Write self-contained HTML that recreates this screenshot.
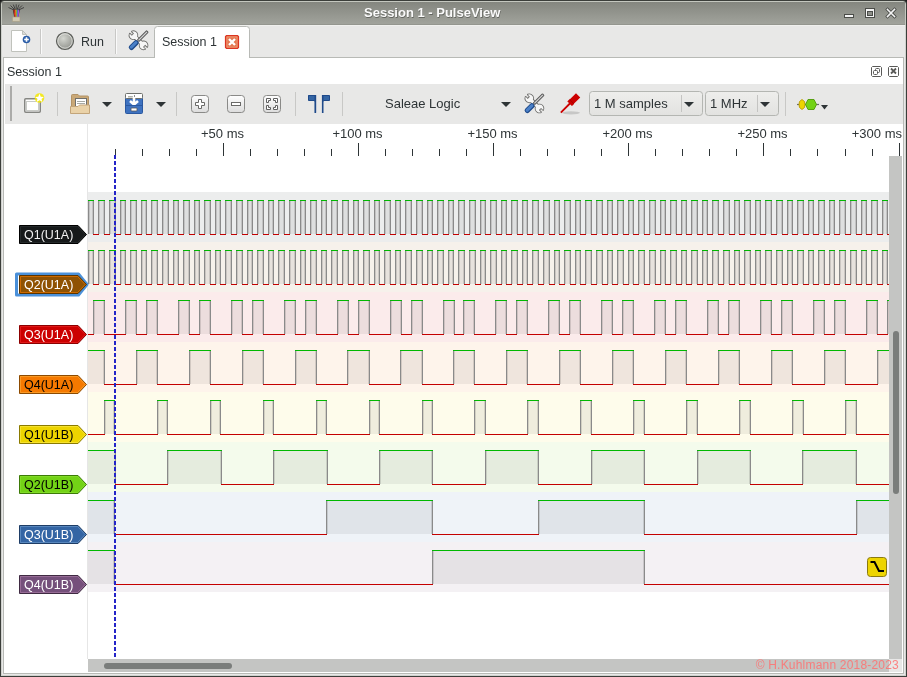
<!DOCTYPE html>
<html><head><meta charset="utf-8">
<style>
html,body{margin:0;padding:0;width:907px;height:677px;overflow:hidden;background:#1a1a1a;}
body{font-family:"Liberation Sans",sans-serif;}
svg{position:absolute;left:0;top:0;will-change:transform;}
svg text{font-family:"Liberation Sans",sans-serif;}
</style></head><body>
<svg width="907" height="677" viewBox="0 0 907 677">

<!-- title bar -->
<defs>
<linearGradient id="tb" x1="0" y1="0" x2="0" y2="1"><stop offset="0" stop-color="#84867f"/><stop offset="1" stop-color="#a1a39c"/></linearGradient>
<radialGradient id="runG" cx="0.4" cy="0.35" r="0.7"><stop offset="0" stop-color="#d4d6d0"/><stop offset="1" stop-color="#8e908a"/></radialGradient>
<linearGradient id="btnG" x1="0" y1="0" x2="0" y2="1"><stop offset="0" stop-color="#ffffff"/><stop offset="1" stop-color="#dcdcdc"/></linearGradient>
<linearGradient id="comboG" x1="0" y1="0" x2="0" y2="1"><stop offset="0" stop-color="#eeeeec"/><stop offset="1" stop-color="#e2e2e0"/></linearGradient>
<path id="wr" d="M-1.8 -12.6L-1.8 -9.2L1.8 -9.2L1.8 -12.6A4.6 4.6 0 1 1 -1.8 -12.6ZM-1.8 -5.5H1.8V5.5H-1.8ZM1.8 12.6L1.8 9.2L-1.8 9.2L-1.8 12.6A4.6 4.6 0 1 1 1.8 12.6Z"/>
</defs>
<path d="M0 4Q0 0 4 0H903Q907 0 907 4V677H0Z" fill="#3b3e3a"/>
<path d="M1 4.5Q1 1 4.5 1H902.5Q906 1 906 4.5V676H1Z" fill="#c4c7bf"/>
<rect x="2" y="2" width="903" height="22" fill="url(#tb)"/>
<rect x="2" y="24" width="903" height="1" fill="#94968f"/>
<rect x="1" y="25" width="905" height="651" fill="#d0d2ce"/>
<rect x="2" y="25" width="903" height="650" fill="#e8e8e7"/>
<rect x="2" y="25" width="903" height="1" fill="#f0f0ee"/>
<!-- app icon -->
<g stroke="#2a2a2a" stroke-width="0.9" stroke-opacity="0.85" fill="none">
<path d="M14 10L8.5 7.5M14.5 9.5L10.5 5.5M15.2 9.3L13.3 4.6M16.2 9.2L16.2 4.3M17.2 9.3L19.1 4.6M18 9.5L22 5.5M18.6 10L24 7.5"/>
</g>
<path d="M12.8 9.5H19.8L18.4 17.2H14.2Z" fill="#2a2a2a"/>
<path d="M13.9 9.8L15 17M15 9.8L15.8 17" stroke="#d83020" stroke-width="1"/>
<path d="M15.6 9.8L16.2 17" stroke="#f08a20" stroke-width="1"/>
<path d="M16.6 9.8L16.8 17" stroke="#8ac040" stroke-width="1"/>
<path d="M17.7 9.8L17.4 17" stroke="#5080e0" stroke-width="0.9"/>
<path d="M18.7 9.8L18 17" stroke="#b050e0" stroke-width="1"/>
<rect x="12.3" y="17" width="7.7" height="4.5" fill="#cfc7b0" stroke="#a39b84" stroke-width="0.6"/>
<text x="364" y="17" font-size="13" font-weight="bold" fill="#3a3c38" opacity="0.55" transform="translate(0.6,0.6)">Session 1 - PulseView</text>
<text x="364" y="17" font-size="13" font-weight="bold" fill="#fafafa">Session 1 - PulseView</text>
<!-- window buttons -->
<rect x="844.5" y="14.5" width="9" height="3" fill="#f4f4f4" stroke="#4a4c48"/>
<rect x="865.5" y="8.5" width="9" height="9" fill="#f4f4f4" stroke="#4a4c48" stroke-width="1"/>
<rect x="867.5" y="11.5" width="5" height="4" fill="#8c8e88" stroke="#4a4c48" stroke-width="1"/>
<path d="M887.5 9.5L894.5 16.5M894.5 9.5L887.5 16.5" stroke="#4a4c48" stroke-width="3.2" stroke-linecap="square"/>
<path d="M887.5 9.5L894.5 16.5M894.5 9.5L887.5 16.5" stroke="#f4f4f4" stroke-width="1.6" stroke-linecap="square"/>
<!-- main toolbar -->
<!-- new doc icon -->
<path d="M11.5 30.5H22.5L26.5 34.5V51.5H11.5Z" fill="#fff" stroke="#c0c2bc"/>
<path d="M22.5 30.5V34.5H26.5Z" fill="#dcdcda" stroke="#c0c2bc" stroke-linejoin="round"/>
<circle cx="26.5" cy="39.5" r="3.8" fill="#2c5ea8"/>
<rect x="24.2" y="38.7" width="4.6" height="1.6" fill="#fff"/>
<rect x="25.7" y="37.2" width="1.6" height="4.6" fill="#fff"/>
<rect x="40" y="29" width="1" height="25" fill="#c8c8c6"/><rect x="41" y="29" width="1" height="25" fill="#fafafa"/>
<!-- run -->
<circle cx="65" cy="41" r="8.5" fill="url(#runG)" stroke="#5e605c" stroke-width="1.2"/>
<circle cx="65" cy="41" r="7.2" fill="none" stroke="#f2f2f0" stroke-width="0.8" stroke-opacity="0.8"/>
<text x="81" y="46" font-size="12.5" fill="#2e3436">Run</text>
<rect x="115" y="29" width="1" height="25" fill="#c8c8c6"/><rect x="116" y="29" width="1" height="25" fill="#fafafa"/>
<!-- tools -->
<g id="tools" transform="translate(138.5,40.3)">
<g transform="rotate(-45) scale(0.86)">
<use href="#wr" fill="#6e6e6c" stroke="#6e6e6c" stroke-width="2" stroke-linejoin="round"/>
<use href="#wr" fill="#f6f6f6" stroke="none"/>
</g>
<g transform="rotate(45)">
<rect x="-1.6" y="-13" width="3.2" height="14" rx="1" fill="#5a5a5a"/>
<rect x="-0.6" y="-12" width="1.2" height="12" fill="#d8d8d8"/>
<rect x="-2.6" y="1" width="5.2" height="11.5" rx="2.2" fill="#1f4a8a"/>
<rect x="-1.7" y="2" width="3" height="9.5" rx="1.4" fill="#4a80c8"/>
</g>
</g>
<!-- tab -->
<path d="M154.5 58V29.5Q154.5 26.5 157.5 26.5H246.5Q249.5 26.5 249.5 29.5V58Z" fill="#fff" stroke="#b8bab6"/>
<text x="162" y="46" font-size="12.5" fill="#2e3436">Session 1</text>
<path d="M226.5 35.5H237.5L238.5 36.5V47.5L237.5 48.5H226.5L225.5 47.5V36.5Z" fill="#e4764e" stroke="#dc3522" stroke-width="1.2"/>
<rect x="227" y="37" width="10" height="10" fill="none" stroke="#f09878" stroke-width="0.8"/>
<path d="M229 39L235 45M235 39L229 45" stroke="#fff" stroke-width="2.4"/>
<!-- dock -->
<rect x="3.5" y="57.5" width="900" height="616" fill="#fff" stroke="#b8bab6"/>
<path d="M155 57.5H249" stroke="#fff"/>
<text x="7" y="76" font-size="12.5" fill="#2e3436">Session 1</text>
<!-- dock buttons -->
<path d="M872.5 66.5H880.5L881.5 67.5V75.5L880.5 76.5H872.5L871.5 75.5V67.5Z" fill="none" stroke="#5a5a58"/>
<rect x="875.5" y="68.5" width="4" height="4" rx="1" fill="none" stroke="#5a5a58"/>
<rect x="873.5" y="70.5" width="4" height="4" rx="1" fill="#fff" stroke="#5a5a58"/>
<path d="M889.5 66.5H897.5L898.5 67.5V75.5L897.5 76.5H889.5L888.5 75.5V67.5Z" fill="none" stroke="#5a5a58"/>
<path d="M891 68.5L896 73.5M896 68.5L891 73.5" stroke="#5a5a58" stroke-width="1.8"/>
<!-- session toolbar -->
<rect x="5" y="84" width="898" height="40" fill="#e8e8e7"/>
<rect x="10" y="86" width="2" height="35" fill="#ababa9"/>
<!-- new session -->
<rect x="24.75" y="98.75" width="15.5" height="13.5" rx="1" fill="#fff" stroke="#858682" stroke-width="1.5"/>
<rect x="26.5" y="101.5" width="12" height="9" fill="#fff" stroke="#c8cac6"/>
<circle cx="39.5" cy="98" r="4.8" fill="#f4e800" fill-opacity="0.85"/>
<path d="M39.5 94.6L40.5 97L43 97.1L41.1 98.7L41.8 101.2L39.5 99.8L37.2 101.2L37.9 98.7L36 97.1L38.5 97Z" fill="#fff" transform="translate(39.5 98) scale(1.25) translate(-39.5 -98)"/>
<rect x="57" y="92" width="1" height="24" fill="#c8c8c6"/>
<!-- folder -->
<path d="M71.5 112.5V95.5Q71.5 94.5 72.5 94.5H78L79.5 96H87.5Q88.5 96 88.5 97V112.5Z" fill="#c9a877" stroke="#b39366"/>
<rect x="75.5" y="98.5" width="11" height="9" fill="#fff" stroke="#6f6f6c"/>
<path d="M77 101.5H85M77 103.5H85" stroke="#a8aaa4"/>
<path d="M70.5 113.5V106.5H78L79.5 105H89.5V113.5Z" fill="#ead2a8" stroke="#c3a57a"/>
<path d="M102 102H112L107 107Z" fill="#2e3436"/>
<!-- save -->
<rect x="125.5" y="97.5" width="17" height="16" rx="1" fill="#3e72c0" stroke="#2a58a0"/>
<rect x="125.5" y="93.5" width="17" height="5" rx="1" fill="#fff" stroke="#6e706c"/>
<rect x="128" y="96" width="5" height="1.5" fill="#b0b2ac"/>
<rect x="134" y="95.5" width="1" height="2.5" fill="#222"/>
<path d="M134 96.5V104M130 101L134 104.5L138 101" stroke="#fff" stroke-width="2.6" fill="none"/>
<path d="M126 105.5H142" stroke="#2a58a0"/>
<rect x="131" y="108" width="6" height="3" rx="0.8" fill="#fff" stroke="#555" stroke-width="0.8"/>
<path d="M156 102H166L161 107Z" fill="#2e3436"/>
<rect x="176" y="92" width="1" height="24" fill="#c8c8c6"/>
<!-- zoom buttons -->
<rect x="191.5" y="95.5" width="17" height="17" rx="3" fill="url(#btnG)" stroke="#8a8a88"/>
<path d="M198.5 99.5H201.5V102.5H204.5V105.5H201.5V108.5H198.5V105.5H195.5V102.5H198.5Z" fill="#fff" stroke="#6a6a68"/>
<rect x="227.5" y="95.5" width="17" height="17" rx="3" fill="url(#btnG)" stroke="#8a8a88"/>
<rect x="231.5" y="102.5" width="9" height="3" fill="#fff" stroke="#6a6a68"/>
<rect x="263.5" y="95.5" width="17" height="17" rx="3" fill="url(#btnG)" stroke="#8a8a88"/>
<g fill="#fff" stroke="#606060" stroke-width="1">
<path d="M266.5 102.5V98.5H270.5V100.5H268.5V102.5Z"/>
<path d="M277.5 102.5V98.5H273.5V100.5H275.5V102.5Z"/>
<path d="M266.5 105.5V109.5H270.5V107.5H268.5V105.5Z"/>
<path d="M277.5 105.5V109.5H273.5V107.5H275.5V105.5Z"/>
</g>
<rect x="295" y="92" width="1" height="24" fill="#c8c8c6"/>
<!-- cursor -->
<path d="M308.5 95.5H315.5V112.5" fill="none" stroke="#1f4a8a" stroke-width="1.2"/>
<path d="M308.5 95.5H315.5V101.5L314 100.5H308.5Z" fill="#3465a4" stroke="#1f4a8a" stroke-width="1"/>
<path d="M315.3 95V113" stroke="#1f4a8a" stroke-width="1.6"/>
<path d="M329.5 95.5H322.5V101.5L324 100.5H329.5Z" fill="#3465a4" stroke="#1f4a8a" stroke-width="1"/>
<path d="M322.7 95V113" stroke="#1f4a8a" stroke-width="1.6"/>
<rect x="342" y="92" width="1" height="24" fill="#c8c8c6"/>
<text x="385" y="107.5" font-size="13" fill="#2e3436">Saleae Logic</text>
<path d="M501 102H511L506 107Z" fill="#2e3436"/>
<!-- tools 2 -->
<use href="#tools" transform="translate(395.9,63.1)"/>
<!-- probe -->
<ellipse cx="571" cy="112.8" rx="9" ry="1.6" fill="#000" fill-opacity="0.14"/>
<g transform="translate(560.8,112.6) rotate(-45)">
<path d="M0 -0.9H12.5V-3.3H15.5V-3H24.5V3H15.5V3.3H12.5V0.9H0Z" fill="#cc0000"/>
<path d="M15.5 -3V3" stroke="#a00000" stroke-width="0.8"/>
</g>
<!-- combos -->
<rect x="589.5" y="91.5" width="113" height="24" rx="3" fill="url(#comboG)" stroke="#b4b6b2"/>
<text x="594" y="107.5" font-size="13" fill="#2e3436">1 M samples</text>
<rect x="681" y="95" width="1" height="17" fill="#c4c4c2"/>
<path d="M684 102H694L689 107Z" fill="#2e3436"/>
<rect x="705.5" y="91.5" width="73" height="24" rx="3" fill="url(#comboG)" stroke="#b4b6b2"/>
<text x="710" y="107.5" font-size="13" fill="#2e3436">1 MHz</text>
<rect x="757" y="95" width="1" height="17" fill="#c4c4c2"/>
<path d="M760 102H770L765 107Z" fill="#2e3436"/>
<rect x="785" y="92" width="1" height="24" fill="#c8c8c6"/>
<!-- decoder -->
<path d="M797 104.5H819" stroke="#6a6a6a" stroke-width="1.2"/>
<path d="M802 99.5L804.5 101.5L805 104.5L804.5 107.5L802 109.5L799.5 107.5L799 104.5L799.5 101.5Z" fill="#edd400" stroke="#b89a00" stroke-width="0.9"/>
<path d="M808 99.5H814L816.5 104.5L814 109.5H808L805.5 104.5Z" fill="#73d216" stroke="#4e9a06" stroke-width="0.9"/>
<path d="M821 105H828L824.5 109.5Z" fill="#2e3436"/>

<rect x="87" y="124" width="1" height="535" fill="#e6e6e6"/>
<path d="M115.5 149V156M142.5 149V156M169.5 149V156M196.5 149V156M223.5 143V156M250.5 149V156M277.5 149V156M304.5 149V156M331.5 149V156M358.5 143V156M385.5 149V156M412.5 149V156M439.5 149V156M466.5 149V156M493.5 143V156M520.5 149V156M547.5 149V156M574.5 149V156M601.5 149V156M628.5 143V156M655.5 149V156M682.5 149V156M709.5 149V156M736.5 149V156M763.5 143V156M790.5 149V156M817.5 149V156M845.5 149V156M872.5 149V156M899.5 143V156" stroke="#2e3436" stroke-width="1"/>
<text x="222.5" y="138" text-anchor="middle" font-size="13" fill="#2e3436">+50 ms</text><text x="357.5" y="138" text-anchor="middle" font-size="13" fill="#2e3436">+100 ms</text><text x="492.5" y="138" text-anchor="middle" font-size="13" fill="#2e3436">+150 ms</text><text x="627.5" y="138" text-anchor="middle" font-size="13" fill="#2e3436">+200 ms</text><text x="762.5" y="138" text-anchor="middle" font-size="13" fill="#2e3436">+250 ms</text><text x="902" y="138" text-anchor="end" font-size="13" fill="#2e3436">+300 ms</text>
<rect x="88" y="192" width="801" height="50" fill="#eceded"/><rect x="88" y="201" width="5" height="33" fill="rgba(0,0,0,0.06)"/>
<rect x="98" y="201" width="6" height="33" fill="rgba(0,0,0,0.06)"/>
<rect x="109" y="201" width="6" height="33" fill="rgba(0,0,0,0.06)"/>
<rect x="120" y="201" width="5" height="33" fill="rgba(0,0,0,0.06)"/>
<rect x="130" y="201" width="6" height="33" fill="rgba(0,0,0,0.06)"/>
<rect x="141" y="201" width="5" height="33" fill="rgba(0,0,0,0.06)"/>
<rect x="151" y="201" width="6" height="33" fill="rgba(0,0,0,0.06)"/>
<rect x="162" y="201" width="6" height="33" fill="rgba(0,0,0,0.06)"/>
<rect x="173" y="201" width="5" height="33" fill="rgba(0,0,0,0.06)"/>
<rect x="183" y="201" width="6" height="33" fill="rgba(0,0,0,0.06)"/>
<rect x="194" y="201" width="5" height="33" fill="rgba(0,0,0,0.06)"/>
<rect x="204" y="201" width="6" height="33" fill="rgba(0,0,0,0.06)"/>
<rect x="215" y="201" width="5" height="33" fill="rgba(0,0,0,0.06)"/>
<rect x="225" y="201" width="6" height="33" fill="rgba(0,0,0,0.06)"/>
<rect x="236" y="201" width="6" height="33" fill="rgba(0,0,0,0.06)"/>
<rect x="247" y="201" width="5" height="33" fill="rgba(0,0,0,0.06)"/>
<rect x="257" y="201" width="6" height="33" fill="rgba(0,0,0,0.06)"/>
<rect x="268" y="201" width="5" height="33" fill="rgba(0,0,0,0.06)"/>
<rect x="278" y="201" width="6" height="33" fill="rgba(0,0,0,0.06)"/>
<rect x="289" y="201" width="6" height="33" fill="rgba(0,0,0,0.06)"/>
<rect x="300" y="201" width="5" height="33" fill="rgba(0,0,0,0.06)"/>
<rect x="310" y="201" width="6" height="33" fill="rgba(0,0,0,0.06)"/>
<rect x="321" y="201" width="5" height="33" fill="rgba(0,0,0,0.06)"/>
<rect x="331" y="201" width="6" height="33" fill="rgba(0,0,0,0.06)"/>
<rect x="342" y="201" width="6" height="33" fill="rgba(0,0,0,0.06)"/>
<rect x="353" y="201" width="5" height="33" fill="rgba(0,0,0,0.06)"/>
<rect x="363" y="201" width="6" height="33" fill="rgba(0,0,0,0.06)"/>
<rect x="374" y="201" width="5" height="33" fill="rgba(0,0,0,0.06)"/>
<rect x="384" y="201" width="6" height="33" fill="rgba(0,0,0,0.06)"/>
<rect x="395" y="201" width="5" height="33" fill="rgba(0,0,0,0.06)"/>
<rect x="405" y="201" width="6" height="33" fill="rgba(0,0,0,0.06)"/>
<rect x="416" y="201" width="6" height="33" fill="rgba(0,0,0,0.06)"/>
<rect x="427" y="201" width="5" height="33" fill="rgba(0,0,0,0.06)"/>
<rect x="437" y="201" width="6" height="33" fill="rgba(0,0,0,0.06)"/>
<rect x="448" y="201" width="5" height="33" fill="rgba(0,0,0,0.06)"/>
<rect x="458" y="201" width="6" height="33" fill="rgba(0,0,0,0.06)"/>
<rect x="469" y="201" width="6" height="33" fill="rgba(0,0,0,0.06)"/>
<rect x="480" y="201" width="5" height="33" fill="rgba(0,0,0,0.06)"/>
<rect x="490" y="201" width="6" height="33" fill="rgba(0,0,0,0.06)"/>
<rect x="501" y="201" width="5" height="33" fill="rgba(0,0,0,0.06)"/>
<rect x="511" y="201" width="6" height="33" fill="rgba(0,0,0,0.06)"/>
<rect x="522" y="201" width="5" height="33" fill="rgba(0,0,0,0.06)"/>
<rect x="532" y="201" width="6" height="33" fill="rgba(0,0,0,0.06)"/>
<rect x="543" y="201" width="6" height="33" fill="rgba(0,0,0,0.06)"/>
<rect x="554" y="201" width="5" height="33" fill="rgba(0,0,0,0.06)"/>
<rect x="564" y="201" width="6" height="33" fill="rgba(0,0,0,0.06)"/>
<rect x="575" y="201" width="5" height="33" fill="rgba(0,0,0,0.06)"/>
<rect x="585" y="201" width="6" height="33" fill="rgba(0,0,0,0.06)"/>
<rect x="596" y="201" width="6" height="33" fill="rgba(0,0,0,0.06)"/>
<rect x="607" y="201" width="5" height="33" fill="rgba(0,0,0,0.06)"/>
<rect x="617" y="201" width="6" height="33" fill="rgba(0,0,0,0.06)"/>
<rect x="628" y="201" width="5" height="33" fill="rgba(0,0,0,0.06)"/>
<rect x="638" y="201" width="6" height="33" fill="rgba(0,0,0,0.06)"/>
<rect x="649" y="201" width="6" height="33" fill="rgba(0,0,0,0.06)"/>
<rect x="660" y="201" width="5" height="33" fill="rgba(0,0,0,0.06)"/>
<rect x="670" y="201" width="6" height="33" fill="rgba(0,0,0,0.06)"/>
<rect x="681" y="201" width="5" height="33" fill="rgba(0,0,0,0.06)"/>
<rect x="691" y="201" width="6" height="33" fill="rgba(0,0,0,0.06)"/>
<rect x="702" y="201" width="5" height="33" fill="rgba(0,0,0,0.06)"/>
<rect x="712" y="201" width="6" height="33" fill="rgba(0,0,0,0.06)"/>
<rect x="723" y="201" width="6" height="33" fill="rgba(0,0,0,0.06)"/>
<rect x="734" y="201" width="5" height="33" fill="rgba(0,0,0,0.06)"/>
<rect x="744" y="201" width="6" height="33" fill="rgba(0,0,0,0.06)"/>
<rect x="755" y="201" width="5" height="33" fill="rgba(0,0,0,0.06)"/>
<rect x="765" y="201" width="6" height="33" fill="rgba(0,0,0,0.06)"/>
<rect x="776" y="201" width="6" height="33" fill="rgba(0,0,0,0.06)"/>
<rect x="787" y="201" width="5" height="33" fill="rgba(0,0,0,0.06)"/>
<rect x="797" y="201" width="6" height="33" fill="rgba(0,0,0,0.06)"/>
<rect x="808" y="201" width="5" height="33" fill="rgba(0,0,0,0.06)"/>
<rect x="818" y="201" width="6" height="33" fill="rgba(0,0,0,0.06)"/>
<rect x="829" y="201" width="5" height="33" fill="rgba(0,0,0,0.06)"/>
<rect x="839" y="201" width="6" height="33" fill="rgba(0,0,0,0.06)"/>
<rect x="850" y="201" width="6" height="33" fill="rgba(0,0,0,0.06)"/>
<rect x="861" y="201" width="5" height="33" fill="rgba(0,0,0,0.06)"/>
<rect x="871" y="201" width="6" height="33" fill="rgba(0,0,0,0.06)"/>
<rect x="882" y="201" width="5" height="33" fill="rgba(0,0,0,0.06)"/>
<path d="M88 200.5H94M98 200.5H105M109 200.5H116M120 200.5H126M130 200.5H137M141 200.5H147M151 200.5H158M162 200.5H169M173 200.5H179M183 200.5H190M194 200.5H200M204 200.5H211M215 200.5H221M225 200.5H232M236 200.5H243M247 200.5H253M257 200.5H264M268 200.5H274M278 200.5H285M289 200.5H296M300 200.5H306M310 200.5H317M321 200.5H327M331 200.5H338M342 200.5H349M353 200.5H359M363 200.5H370M374 200.5H380M384 200.5H391M395 200.5H401M405 200.5H412M416 200.5H423M427 200.5H433M437 200.5H444M448 200.5H454M458 200.5H465M469 200.5H476M480 200.5H486M490 200.5H497M501 200.5H507M511 200.5H518M522 200.5H528M532 200.5H539M543 200.5H550M554 200.5H560M564 200.5H571M575 200.5H581M585 200.5H592M596 200.5H603M607 200.5H613M617 200.5H624M628 200.5H634M638 200.5H645M649 200.5H656M660 200.5H666M670 200.5H677M681 200.5H687M691 200.5H698M702 200.5H708M712 200.5H719M723 200.5H730M734 200.5H740M744 200.5H751M755 200.5H761M765 200.5H772M776 200.5H783M787 200.5H793M797 200.5H804M808 200.5H814M818 200.5H825M829 200.5H835M839 200.5H846M850 200.5H857M861 200.5H867M871 200.5H878M882 200.5H888" stroke="#00b800" fill="none"/>
<path d="M93 234.5H99M104 234.5H110M115 234.5H121M125 234.5H131M136 234.5H142M146 234.5H152M157 234.5H163M168 234.5H174M178 234.5H184M189 234.5H195M199 234.5H205M210 234.5H216M220 234.5H226M231 234.5H237M242 234.5H248M252 234.5H258M263 234.5H269M273 234.5H279M284 234.5H290M295 234.5H301M305 234.5H311M316 234.5H322M326 234.5H332M337 234.5H343M348 234.5H354M358 234.5H364M369 234.5H375M379 234.5H385M390 234.5H396M400 234.5H406M411 234.5H417M422 234.5H428M432 234.5H438M443 234.5H449M453 234.5H459M464 234.5H470M475 234.5H481M485 234.5H491M496 234.5H502M506 234.5H512M517 234.5H523M527 234.5H533M538 234.5H544M549 234.5H555M559 234.5H565M570 234.5H576M580 234.5H586M591 234.5H597M602 234.5H608M612 234.5H618M623 234.5H629M633 234.5H639M644 234.5H650M655 234.5H661M665 234.5H671M676 234.5H682M686 234.5H692M697 234.5H703M707 234.5H713M718 234.5H724M729 234.5H735M739 234.5H745M750 234.5H756M760 234.5H766M771 234.5H777M782 234.5H788M792 234.5H798M803 234.5H809M813 234.5H819M824 234.5H830M834 234.5H840M845 234.5H851M856 234.5H862M866 234.5H872M877 234.5H883M887 234.5H890" stroke="#c40000" fill="none"/>
<path d="M88.5 201V234M93.5 201V234M98.5 201V234M104.5 201V234M109.5 201V234M115.5 201V234M120.5 201V234M125.5 201V234M130.5 201V234M136.5 201V234M141.5 201V234M146.5 201V234M151.5 201V234M157.5 201V234M162.5 201V234M168.5 201V234M173.5 201V234M178.5 201V234M183.5 201V234M189.5 201V234M194.5 201V234M199.5 201V234M204.5 201V234M210.5 201V234M215.5 201V234M220.5 201V234M225.5 201V234M231.5 201V234M236.5 201V234M242.5 201V234M247.5 201V234M252.5 201V234M257.5 201V234M263.5 201V234M268.5 201V234M273.5 201V234M278.5 201V234M284.5 201V234M289.5 201V234M295.5 201V234M300.5 201V234M305.5 201V234M310.5 201V234M316.5 201V234M321.5 201V234M326.5 201V234M331.5 201V234M337.5 201V234M342.5 201V234M348.5 201V234M353.5 201V234M358.5 201V234M363.5 201V234M369.5 201V234M374.5 201V234M379.5 201V234M384.5 201V234M390.5 201V234M395.5 201V234M400.5 201V234M405.5 201V234M411.5 201V234M416.5 201V234M422.5 201V234M427.5 201V234M432.5 201V234M437.5 201V234M443.5 201V234M448.5 201V234M453.5 201V234M458.5 201V234M464.5 201V234M469.5 201V234M475.5 201V234M480.5 201V234M485.5 201V234M490.5 201V234M496.5 201V234M501.5 201V234M506.5 201V234M511.5 201V234M517.5 201V234M522.5 201V234M527.5 201V234M532.5 201V234M538.5 201V234M543.5 201V234M549.5 201V234M554.5 201V234M559.5 201V234M564.5 201V234M570.5 201V234M575.5 201V234M580.5 201V234M585.5 201V234M591.5 201V234M596.5 201V234M602.5 201V234M607.5 201V234M612.5 201V234M617.5 201V234M623.5 201V234M628.5 201V234M633.5 201V234M638.5 201V234M644.5 201V234M649.5 201V234M655.5 201V234M660.5 201V234M665.5 201V234M670.5 201V234M676.5 201V234M681.5 201V234M686.5 201V234M691.5 201V234M697.5 201V234M702.5 201V234M707.5 201V234M712.5 201V234M718.5 201V234M723.5 201V234M729.5 201V234M734.5 201V234M739.5 201V234M744.5 201V234M750.5 201V234M755.5 201V234M760.5 201V234M765.5 201V234M771.5 201V234M776.5 201V234M782.5 201V234M787.5 201V234M792.5 201V234M797.5 201V234M803.5 201V234M808.5 201V234M813.5 201V234M818.5 201V234M824.5 201V234M829.5 201V234M834.5 201V234M839.5 201V234M845.5 201V234M850.5 201V234M856.5 201V234M861.5 201V234M866.5 201V234M871.5 201V234M877.5 201V234M882.5 201V234M887.5 201V234" stroke="#8a8a8a" fill="none"/>
<path d="M89.5 201V234M92.5 201V234M99.5 201V234M103.5 201V234M110.5 201V234M114.5 201V234M121.5 201V234M124.5 201V234M131.5 201V234M135.5 201V234M142.5 201V234M145.5 201V234M152.5 201V234M156.5 201V234M163.5 201V234M167.5 201V234M174.5 201V234M177.5 201V234M184.5 201V234M188.5 201V234M195.5 201V234M198.5 201V234M205.5 201V234M209.5 201V234M216.5 201V234M219.5 201V234M226.5 201V234M230.5 201V234M237.5 201V234M241.5 201V234M248.5 201V234M251.5 201V234M258.5 201V234M262.5 201V234M269.5 201V234M272.5 201V234M279.5 201V234M283.5 201V234M290.5 201V234M294.5 201V234M301.5 201V234M304.5 201V234M311.5 201V234M315.5 201V234M322.5 201V234M325.5 201V234M332.5 201V234M336.5 201V234M343.5 201V234M347.5 201V234M354.5 201V234M357.5 201V234M364.5 201V234M368.5 201V234M375.5 201V234M378.5 201V234M385.5 201V234M389.5 201V234M396.5 201V234M399.5 201V234M406.5 201V234M410.5 201V234M417.5 201V234M421.5 201V234M428.5 201V234M431.5 201V234M438.5 201V234M442.5 201V234M449.5 201V234M452.5 201V234M459.5 201V234M463.5 201V234M470.5 201V234M474.5 201V234M481.5 201V234M484.5 201V234M491.5 201V234M495.5 201V234M502.5 201V234M505.5 201V234M512.5 201V234M516.5 201V234M523.5 201V234M526.5 201V234M533.5 201V234M537.5 201V234M544.5 201V234M548.5 201V234M555.5 201V234M558.5 201V234M565.5 201V234M569.5 201V234M576.5 201V234M579.5 201V234M586.5 201V234M590.5 201V234M597.5 201V234M601.5 201V234M608.5 201V234M611.5 201V234M618.5 201V234M622.5 201V234M629.5 201V234M632.5 201V234M639.5 201V234M643.5 201V234M650.5 201V234M654.5 201V234M661.5 201V234M664.5 201V234M671.5 201V234M675.5 201V234M682.5 201V234M685.5 201V234M692.5 201V234M696.5 201V234M703.5 201V234M706.5 201V234M713.5 201V234M717.5 201V234M724.5 201V234M728.5 201V234M735.5 201V234M738.5 201V234M745.5 201V234M749.5 201V234M756.5 201V234M759.5 201V234M766.5 201V234M770.5 201V234M777.5 201V234M781.5 201V234M788.5 201V234M791.5 201V234M798.5 201V234M802.5 201V234M809.5 201V234M812.5 201V234M819.5 201V234M823.5 201V234M830.5 201V234M833.5 201V234M840.5 201V234M844.5 201V234M851.5 201V234M855.5 201V234M862.5 201V234M865.5 201V234M872.5 201V234M876.5 201V234M883.5 201V234M886.5 201V234" stroke="#000" stroke-opacity="0.12" fill="none"/><rect x="88" y="242" width="801" height="50" fill="#f6f1eb"/><rect x="88" y="251" width="5" height="33" fill="rgba(0,0,0,0.06)"/>
<rect x="98" y="251" width="6" height="33" fill="rgba(0,0,0,0.06)"/>
<rect x="109" y="251" width="6" height="33" fill="rgba(0,0,0,0.06)"/>
<rect x="120" y="251" width="5" height="33" fill="rgba(0,0,0,0.06)"/>
<rect x="130" y="251" width="6" height="33" fill="rgba(0,0,0,0.06)"/>
<rect x="141" y="251" width="5" height="33" fill="rgba(0,0,0,0.06)"/>
<rect x="151" y="251" width="6" height="33" fill="rgba(0,0,0,0.06)"/>
<rect x="162" y="251" width="6" height="33" fill="rgba(0,0,0,0.06)"/>
<rect x="173" y="251" width="5" height="33" fill="rgba(0,0,0,0.06)"/>
<rect x="183" y="251" width="6" height="33" fill="rgba(0,0,0,0.06)"/>
<rect x="194" y="251" width="5" height="33" fill="rgba(0,0,0,0.06)"/>
<rect x="204" y="251" width="6" height="33" fill="rgba(0,0,0,0.06)"/>
<rect x="215" y="251" width="5" height="33" fill="rgba(0,0,0,0.06)"/>
<rect x="225" y="251" width="6" height="33" fill="rgba(0,0,0,0.06)"/>
<rect x="236" y="251" width="6" height="33" fill="rgba(0,0,0,0.06)"/>
<rect x="247" y="251" width="5" height="33" fill="rgba(0,0,0,0.06)"/>
<rect x="257" y="251" width="6" height="33" fill="rgba(0,0,0,0.06)"/>
<rect x="268" y="251" width="5" height="33" fill="rgba(0,0,0,0.06)"/>
<rect x="278" y="251" width="6" height="33" fill="rgba(0,0,0,0.06)"/>
<rect x="289" y="251" width="6" height="33" fill="rgba(0,0,0,0.06)"/>
<rect x="300" y="251" width="5" height="33" fill="rgba(0,0,0,0.06)"/>
<rect x="310" y="251" width="6" height="33" fill="rgba(0,0,0,0.06)"/>
<rect x="321" y="251" width="5" height="33" fill="rgba(0,0,0,0.06)"/>
<rect x="331" y="251" width="6" height="33" fill="rgba(0,0,0,0.06)"/>
<rect x="342" y="251" width="6" height="33" fill="rgba(0,0,0,0.06)"/>
<rect x="353" y="251" width="5" height="33" fill="rgba(0,0,0,0.06)"/>
<rect x="363" y="251" width="6" height="33" fill="rgba(0,0,0,0.06)"/>
<rect x="374" y="251" width="5" height="33" fill="rgba(0,0,0,0.06)"/>
<rect x="384" y="251" width="6" height="33" fill="rgba(0,0,0,0.06)"/>
<rect x="395" y="251" width="5" height="33" fill="rgba(0,0,0,0.06)"/>
<rect x="405" y="251" width="6" height="33" fill="rgba(0,0,0,0.06)"/>
<rect x="416" y="251" width="6" height="33" fill="rgba(0,0,0,0.06)"/>
<rect x="427" y="251" width="5" height="33" fill="rgba(0,0,0,0.06)"/>
<rect x="437" y="251" width="6" height="33" fill="rgba(0,0,0,0.06)"/>
<rect x="448" y="251" width="5" height="33" fill="rgba(0,0,0,0.06)"/>
<rect x="458" y="251" width="6" height="33" fill="rgba(0,0,0,0.06)"/>
<rect x="469" y="251" width="6" height="33" fill="rgba(0,0,0,0.06)"/>
<rect x="480" y="251" width="5" height="33" fill="rgba(0,0,0,0.06)"/>
<rect x="490" y="251" width="6" height="33" fill="rgba(0,0,0,0.06)"/>
<rect x="501" y="251" width="5" height="33" fill="rgba(0,0,0,0.06)"/>
<rect x="511" y="251" width="6" height="33" fill="rgba(0,0,0,0.06)"/>
<rect x="522" y="251" width="5" height="33" fill="rgba(0,0,0,0.06)"/>
<rect x="532" y="251" width="6" height="33" fill="rgba(0,0,0,0.06)"/>
<rect x="543" y="251" width="6" height="33" fill="rgba(0,0,0,0.06)"/>
<rect x="554" y="251" width="5" height="33" fill="rgba(0,0,0,0.06)"/>
<rect x="564" y="251" width="6" height="33" fill="rgba(0,0,0,0.06)"/>
<rect x="575" y="251" width="5" height="33" fill="rgba(0,0,0,0.06)"/>
<rect x="585" y="251" width="6" height="33" fill="rgba(0,0,0,0.06)"/>
<rect x="596" y="251" width="6" height="33" fill="rgba(0,0,0,0.06)"/>
<rect x="607" y="251" width="5" height="33" fill="rgba(0,0,0,0.06)"/>
<rect x="617" y="251" width="6" height="33" fill="rgba(0,0,0,0.06)"/>
<rect x="628" y="251" width="5" height="33" fill="rgba(0,0,0,0.06)"/>
<rect x="638" y="251" width="6" height="33" fill="rgba(0,0,0,0.06)"/>
<rect x="649" y="251" width="6" height="33" fill="rgba(0,0,0,0.06)"/>
<rect x="660" y="251" width="5" height="33" fill="rgba(0,0,0,0.06)"/>
<rect x="670" y="251" width="6" height="33" fill="rgba(0,0,0,0.06)"/>
<rect x="681" y="251" width="5" height="33" fill="rgba(0,0,0,0.06)"/>
<rect x="691" y="251" width="6" height="33" fill="rgba(0,0,0,0.06)"/>
<rect x="702" y="251" width="5" height="33" fill="rgba(0,0,0,0.06)"/>
<rect x="712" y="251" width="6" height="33" fill="rgba(0,0,0,0.06)"/>
<rect x="723" y="251" width="6" height="33" fill="rgba(0,0,0,0.06)"/>
<rect x="734" y="251" width="5" height="33" fill="rgba(0,0,0,0.06)"/>
<rect x="744" y="251" width="6" height="33" fill="rgba(0,0,0,0.06)"/>
<rect x="755" y="251" width="5" height="33" fill="rgba(0,0,0,0.06)"/>
<rect x="765" y="251" width="6" height="33" fill="rgba(0,0,0,0.06)"/>
<rect x="776" y="251" width="6" height="33" fill="rgba(0,0,0,0.06)"/>
<rect x="787" y="251" width="5" height="33" fill="rgba(0,0,0,0.06)"/>
<rect x="797" y="251" width="6" height="33" fill="rgba(0,0,0,0.06)"/>
<rect x="808" y="251" width="5" height="33" fill="rgba(0,0,0,0.06)"/>
<rect x="818" y="251" width="6" height="33" fill="rgba(0,0,0,0.06)"/>
<rect x="829" y="251" width="5" height="33" fill="rgba(0,0,0,0.06)"/>
<rect x="839" y="251" width="6" height="33" fill="rgba(0,0,0,0.06)"/>
<rect x="850" y="251" width="6" height="33" fill="rgba(0,0,0,0.06)"/>
<rect x="861" y="251" width="5" height="33" fill="rgba(0,0,0,0.06)"/>
<rect x="871" y="251" width="6" height="33" fill="rgba(0,0,0,0.06)"/>
<rect x="882" y="251" width="5" height="33" fill="rgba(0,0,0,0.06)"/>
<path d="M88 250.5H94M98 250.5H105M109 250.5H116M120 250.5H126M130 250.5H137M141 250.5H147M151 250.5H158M162 250.5H169M173 250.5H179M183 250.5H190M194 250.5H200M204 250.5H211M215 250.5H221M225 250.5H232M236 250.5H243M247 250.5H253M257 250.5H264M268 250.5H274M278 250.5H285M289 250.5H296M300 250.5H306M310 250.5H317M321 250.5H327M331 250.5H338M342 250.5H349M353 250.5H359M363 250.5H370M374 250.5H380M384 250.5H391M395 250.5H401M405 250.5H412M416 250.5H423M427 250.5H433M437 250.5H444M448 250.5H454M458 250.5H465M469 250.5H476M480 250.5H486M490 250.5H497M501 250.5H507M511 250.5H518M522 250.5H528M532 250.5H539M543 250.5H550M554 250.5H560M564 250.5H571M575 250.5H581M585 250.5H592M596 250.5H603M607 250.5H613M617 250.5H624M628 250.5H634M638 250.5H645M649 250.5H656M660 250.5H666M670 250.5H677M681 250.5H687M691 250.5H698M702 250.5H708M712 250.5H719M723 250.5H730M734 250.5H740M744 250.5H751M755 250.5H761M765 250.5H772M776 250.5H783M787 250.5H793M797 250.5H804M808 250.5H814M818 250.5H825M829 250.5H835M839 250.5H846M850 250.5H857M861 250.5H867M871 250.5H878M882 250.5H888" stroke="#00b800" fill="none"/>
<path d="M93 284.5H99M104 284.5H110M115 284.5H121M125 284.5H131M136 284.5H142M146 284.5H152M157 284.5H163M168 284.5H174M178 284.5H184M189 284.5H195M199 284.5H205M210 284.5H216M220 284.5H226M231 284.5H237M242 284.5H248M252 284.5H258M263 284.5H269M273 284.5H279M284 284.5H290M295 284.5H301M305 284.5H311M316 284.5H322M326 284.5H332M337 284.5H343M348 284.5H354M358 284.5H364M369 284.5H375M379 284.5H385M390 284.5H396M400 284.5H406M411 284.5H417M422 284.5H428M432 284.5H438M443 284.5H449M453 284.5H459M464 284.5H470M475 284.5H481M485 284.5H491M496 284.5H502M506 284.5H512M517 284.5H523M527 284.5H533M538 284.5H544M549 284.5H555M559 284.5H565M570 284.5H576M580 284.5H586M591 284.5H597M602 284.5H608M612 284.5H618M623 284.5H629M633 284.5H639M644 284.5H650M655 284.5H661M665 284.5H671M676 284.5H682M686 284.5H692M697 284.5H703M707 284.5H713M718 284.5H724M729 284.5H735M739 284.5H745M750 284.5H756M760 284.5H766M771 284.5H777M782 284.5H788M792 284.5H798M803 284.5H809M813 284.5H819M824 284.5H830M834 284.5H840M845 284.5H851M856 284.5H862M866 284.5H872M877 284.5H883M887 284.5H890" stroke="#c40000" fill="none"/>
<path d="M88.5 251V284M93.5 251V284M98.5 251V284M104.5 251V284M109.5 251V284M115.5 251V284M120.5 251V284M125.5 251V284M130.5 251V284M136.5 251V284M141.5 251V284M146.5 251V284M151.5 251V284M157.5 251V284M162.5 251V284M168.5 251V284M173.5 251V284M178.5 251V284M183.5 251V284M189.5 251V284M194.5 251V284M199.5 251V284M204.5 251V284M210.5 251V284M215.5 251V284M220.5 251V284M225.5 251V284M231.5 251V284M236.5 251V284M242.5 251V284M247.5 251V284M252.5 251V284M257.5 251V284M263.5 251V284M268.5 251V284M273.5 251V284M278.5 251V284M284.5 251V284M289.5 251V284M295.5 251V284M300.5 251V284M305.5 251V284M310.5 251V284M316.5 251V284M321.5 251V284M326.5 251V284M331.5 251V284M337.5 251V284M342.5 251V284M348.5 251V284M353.5 251V284M358.5 251V284M363.5 251V284M369.5 251V284M374.5 251V284M379.5 251V284M384.5 251V284M390.5 251V284M395.5 251V284M400.5 251V284M405.5 251V284M411.5 251V284M416.5 251V284M422.5 251V284M427.5 251V284M432.5 251V284M437.5 251V284M443.5 251V284M448.5 251V284M453.5 251V284M458.5 251V284M464.5 251V284M469.5 251V284M475.5 251V284M480.5 251V284M485.5 251V284M490.5 251V284M496.5 251V284M501.5 251V284M506.5 251V284M511.5 251V284M517.5 251V284M522.5 251V284M527.5 251V284M532.5 251V284M538.5 251V284M543.5 251V284M549.5 251V284M554.5 251V284M559.5 251V284M564.5 251V284M570.5 251V284M575.5 251V284M580.5 251V284M585.5 251V284M591.5 251V284M596.5 251V284M602.5 251V284M607.5 251V284M612.5 251V284M617.5 251V284M623.5 251V284M628.5 251V284M633.5 251V284M638.5 251V284M644.5 251V284M649.5 251V284M655.5 251V284M660.5 251V284M665.5 251V284M670.5 251V284M676.5 251V284M681.5 251V284M686.5 251V284M691.5 251V284M697.5 251V284M702.5 251V284M707.5 251V284M712.5 251V284M718.5 251V284M723.5 251V284M729.5 251V284M734.5 251V284M739.5 251V284M744.5 251V284M750.5 251V284M755.5 251V284M760.5 251V284M765.5 251V284M771.5 251V284M776.5 251V284M782.5 251V284M787.5 251V284M792.5 251V284M797.5 251V284M803.5 251V284M808.5 251V284M813.5 251V284M818.5 251V284M824.5 251V284M829.5 251V284M834.5 251V284M839.5 251V284M845.5 251V284M850.5 251V284M856.5 251V284M861.5 251V284M866.5 251V284M871.5 251V284M877.5 251V284M882.5 251V284M887.5 251V284" stroke="#8a8a8a" fill="none"/>
<path d="M89.5 251V284M92.5 251V284M99.5 251V284M103.5 251V284M110.5 251V284M114.5 251V284M121.5 251V284M124.5 251V284M131.5 251V284M135.5 251V284M142.5 251V284M145.5 251V284M152.5 251V284M156.5 251V284M163.5 251V284M167.5 251V284M174.5 251V284M177.5 251V284M184.5 251V284M188.5 251V284M195.5 251V284M198.5 251V284M205.5 251V284M209.5 251V284M216.5 251V284M219.5 251V284M226.5 251V284M230.5 251V284M237.5 251V284M241.5 251V284M248.5 251V284M251.5 251V284M258.5 251V284M262.5 251V284M269.5 251V284M272.5 251V284M279.5 251V284M283.5 251V284M290.5 251V284M294.5 251V284M301.5 251V284M304.5 251V284M311.5 251V284M315.5 251V284M322.5 251V284M325.5 251V284M332.5 251V284M336.5 251V284M343.5 251V284M347.5 251V284M354.5 251V284M357.5 251V284M364.5 251V284M368.5 251V284M375.5 251V284M378.5 251V284M385.5 251V284M389.5 251V284M396.5 251V284M399.5 251V284M406.5 251V284M410.5 251V284M417.5 251V284M421.5 251V284M428.5 251V284M431.5 251V284M438.5 251V284M442.5 251V284M449.5 251V284M452.5 251V284M459.5 251V284M463.5 251V284M470.5 251V284M474.5 251V284M481.5 251V284M484.5 251V284M491.5 251V284M495.5 251V284M502.5 251V284M505.5 251V284M512.5 251V284M516.5 251V284M523.5 251V284M526.5 251V284M533.5 251V284M537.5 251V284M544.5 251V284M548.5 251V284M555.5 251V284M558.5 251V284M565.5 251V284M569.5 251V284M576.5 251V284M579.5 251V284M586.5 251V284M590.5 251V284M597.5 251V284M601.5 251V284M608.5 251V284M611.5 251V284M618.5 251V284M622.5 251V284M629.5 251V284M632.5 251V284M639.5 251V284M643.5 251V284M650.5 251V284M654.5 251V284M661.5 251V284M664.5 251V284M671.5 251V284M675.5 251V284M682.5 251V284M685.5 251V284M692.5 251V284M696.5 251V284M703.5 251V284M706.5 251V284M713.5 251V284M717.5 251V284M724.5 251V284M728.5 251V284M735.5 251V284M738.5 251V284M745.5 251V284M749.5 251V284M756.5 251V284M759.5 251V284M766.5 251V284M770.5 251V284M777.5 251V284M781.5 251V284M788.5 251V284M791.5 251V284M798.5 251V284M802.5 251V284M809.5 251V284M812.5 251V284M819.5 251V284M823.5 251V284M830.5 251V284M833.5 251V284M840.5 251V284M844.5 251V284M851.5 251V284M855.5 251V284M862.5 251V284M865.5 251V284M872.5 251V284M876.5 251V284M883.5 251V284M886.5 251V284" stroke="#000" stroke-opacity="0.12" fill="none"/><rect x="88" y="292" width="801" height="50" fill="#fbebeb"/><rect x="93" y="301" width="11" height="33" fill="rgba(0,0,0,0.06)"/>
<rect x="125" y="301" width="11" height="33" fill="rgba(0,0,0,0.06)"/>
<rect x="146" y="301" width="11" height="33" fill="rgba(0,0,0,0.06)"/>
<rect x="178" y="301" width="11" height="33" fill="rgba(0,0,0,0.06)"/>
<rect x="199" y="301" width="11" height="33" fill="rgba(0,0,0,0.06)"/>
<rect x="231" y="301" width="11" height="33" fill="rgba(0,0,0,0.06)"/>
<rect x="252" y="301" width="11" height="33" fill="rgba(0,0,0,0.06)"/>
<rect x="284" y="301" width="11" height="33" fill="rgba(0,0,0,0.06)"/>
<rect x="305" y="301" width="11" height="33" fill="rgba(0,0,0,0.06)"/>
<rect x="337" y="301" width="11" height="33" fill="rgba(0,0,0,0.06)"/>
<rect x="358" y="301" width="11" height="33" fill="rgba(0,0,0,0.06)"/>
<rect x="390" y="301" width="11" height="33" fill="rgba(0,0,0,0.06)"/>
<rect x="411" y="301" width="11" height="33" fill="rgba(0,0,0,0.06)"/>
<rect x="443" y="301" width="11" height="33" fill="rgba(0,0,0,0.06)"/>
<rect x="463" y="301" width="11" height="33" fill="rgba(0,0,0,0.06)"/>
<rect x="495" y="301" width="11" height="33" fill="rgba(0,0,0,0.06)"/>
<rect x="516" y="301" width="11" height="33" fill="rgba(0,0,0,0.06)"/>
<rect x="548" y="301" width="11" height="33" fill="rgba(0,0,0,0.06)"/>
<rect x="569" y="301" width="11" height="33" fill="rgba(0,0,0,0.06)"/>
<rect x="601" y="301" width="11" height="33" fill="rgba(0,0,0,0.06)"/>
<rect x="622" y="301" width="11" height="33" fill="rgba(0,0,0,0.06)"/>
<rect x="654" y="301" width="11" height="33" fill="rgba(0,0,0,0.06)"/>
<rect x="675" y="301" width="11" height="33" fill="rgba(0,0,0,0.06)"/>
<rect x="707" y="301" width="11" height="33" fill="rgba(0,0,0,0.06)"/>
<rect x="728" y="301" width="11" height="33" fill="rgba(0,0,0,0.06)"/>
<rect x="760" y="301" width="11" height="33" fill="rgba(0,0,0,0.06)"/>
<rect x="781" y="301" width="11" height="33" fill="rgba(0,0,0,0.06)"/>
<rect x="813" y="301" width="11" height="33" fill="rgba(0,0,0,0.06)"/>
<rect x="834" y="301" width="11" height="33" fill="rgba(0,0,0,0.06)"/>
<rect x="866" y="301" width="11" height="33" fill="rgba(0,0,0,0.06)"/>
<rect x="887" y="301" width="2" height="33" fill="rgba(0,0,0,0.06)"/>
<path d="M93 300.5H105M125 300.5H137M146 300.5H158M178 300.5H190M199 300.5H211M231 300.5H243M252 300.5H264M284 300.5H296M305 300.5H317M337 300.5H349M358 300.5H370M390 300.5H402M411 300.5H423M443 300.5H455M463 300.5H475M495 300.5H507M516 300.5H528M548 300.5H560M569 300.5H581M601 300.5H613M622 300.5H634M654 300.5H666M675 300.5H687M707 300.5H719M728 300.5H740M760 300.5H772M781 300.5H793M813 300.5H825M834 300.5H846M866 300.5H878M887 300.5H890" stroke="#00b800" fill="none"/>
<path d="M88 334.5H94M104 334.5H126M136 334.5H147M157 334.5H179M189 334.5H200M210 334.5H232M242 334.5H253M263 334.5H285M295 334.5H306M316 334.5H338M348 334.5H359M369 334.5H391M401 334.5H412M422 334.5H444M454 334.5H464M474 334.5H496M506 334.5H517M527 334.5H549M559 334.5H570M580 334.5H602M612 334.5H623M633 334.5H655M665 334.5H676M686 334.5H708M718 334.5H729M739 334.5H761M771 334.5H782M792 334.5H814M824 334.5H835M845 334.5H867M877 334.5H888" stroke="#c40000" fill="none"/>
<path d="M93.5 301V334M104.5 301V334M125.5 301V334M136.5 301V334M146.5 301V334M157.5 301V334M178.5 301V334M189.5 301V334M199.5 301V334M210.5 301V334M231.5 301V334M242.5 301V334M252.5 301V334M263.5 301V334M284.5 301V334M295.5 301V334M305.5 301V334M316.5 301V334M337.5 301V334M348.5 301V334M358.5 301V334M369.5 301V334M390.5 301V334M401.5 301V334M411.5 301V334M422.5 301V334M443.5 301V334M454.5 301V334M463.5 301V334M474.5 301V334M495.5 301V334M506.5 301V334M516.5 301V334M527.5 301V334M548.5 301V334M559.5 301V334M569.5 301V334M580.5 301V334M601.5 301V334M612.5 301V334M622.5 301V334M633.5 301V334M654.5 301V334M665.5 301V334M675.5 301V334M686.5 301V334M707.5 301V334M718.5 301V334M728.5 301V334M739.5 301V334M760.5 301V334M771.5 301V334M781.5 301V334M792.5 301V334M813.5 301V334M824.5 301V334M834.5 301V334M845.5 301V334M866.5 301V334M877.5 301V334M887.5 301V334" stroke="#8a8a8a" fill="none"/>
<path d="M94.5 301V334M103.5 301V334M126.5 301V334M135.5 301V334M147.5 301V334M156.5 301V334M179.5 301V334M188.5 301V334M200.5 301V334M209.5 301V334M232.5 301V334M241.5 301V334M253.5 301V334M262.5 301V334M285.5 301V334M294.5 301V334M306.5 301V334M315.5 301V334M338.5 301V334M347.5 301V334M359.5 301V334M368.5 301V334M391.5 301V334M400.5 301V334M412.5 301V334M421.5 301V334M444.5 301V334M453.5 301V334M464.5 301V334M473.5 301V334M496.5 301V334M505.5 301V334M517.5 301V334M526.5 301V334M549.5 301V334M558.5 301V334M570.5 301V334M579.5 301V334M602.5 301V334M611.5 301V334M623.5 301V334M632.5 301V334M655.5 301V334M664.5 301V334M676.5 301V334M685.5 301V334M708.5 301V334M717.5 301V334M729.5 301V334M738.5 301V334M761.5 301V334M770.5 301V334M782.5 301V334M791.5 301V334M814.5 301V334M823.5 301V334M835.5 301V334M844.5 301V334M867.5 301V334M876.5 301V334M888.5 301V334" stroke="#000" stroke-opacity="0.12" fill="none"/><rect x="88" y="342" width="801" height="50" fill="#fef4eb"/><rect x="88" y="351" width="16" height="33" fill="rgba(0,0,0,0.06)"/>
<rect x="136" y="351" width="21" height="33" fill="rgba(0,0,0,0.06)"/>
<rect x="189" y="351" width="21" height="33" fill="rgba(0,0,0,0.06)"/>
<rect x="242" y="351" width="21" height="33" fill="rgba(0,0,0,0.06)"/>
<rect x="295" y="351" width="21" height="33" fill="rgba(0,0,0,0.06)"/>
<rect x="347" y="351" width="22" height="33" fill="rgba(0,0,0,0.06)"/>
<rect x="400" y="351" width="22" height="33" fill="rgba(0,0,0,0.06)"/>
<rect x="453" y="351" width="21" height="33" fill="rgba(0,0,0,0.06)"/>
<rect x="506" y="351" width="21" height="33" fill="rgba(0,0,0,0.06)"/>
<rect x="559" y="351" width="21" height="33" fill="rgba(0,0,0,0.06)"/>
<rect x="612" y="351" width="21" height="33" fill="rgba(0,0,0,0.06)"/>
<rect x="665" y="351" width="21" height="33" fill="rgba(0,0,0,0.06)"/>
<rect x="718" y="351" width="21" height="33" fill="rgba(0,0,0,0.06)"/>
<rect x="771" y="351" width="21" height="33" fill="rgba(0,0,0,0.06)"/>
<rect x="824" y="351" width="21" height="33" fill="rgba(0,0,0,0.06)"/>
<rect x="877" y="351" width="12" height="33" fill="rgba(0,0,0,0.06)"/>
<path d="M88 350.5H105M136 350.5H158M189 350.5H211M242 350.5H264M295 350.5H317M347 350.5H370M400 350.5H423M453 350.5H475M506 350.5H528M559 350.5H581M612 350.5H634M665 350.5H687M718 350.5H740M771 350.5H793M824 350.5H846M877 350.5H890" stroke="#00b800" fill="none"/>
<path d="M104 384.5H137M157 384.5H190M210 384.5H243M263 384.5H296M316 384.5H348M369 384.5H401M422 384.5H454M474 384.5H507M527 384.5H560M580 384.5H613M633 384.5H666M686 384.5H719M739 384.5H772M792 384.5H825M845 384.5H878" stroke="#c40000" fill="none"/>
<path d="M104.5 351V384M136.5 351V384M157.5 351V384M189.5 351V384M210.5 351V384M242.5 351V384M263.5 351V384M295.5 351V384M316.5 351V384M347.5 351V384M369.5 351V384M400.5 351V384M422.5 351V384M453.5 351V384M474.5 351V384M506.5 351V384M527.5 351V384M559.5 351V384M580.5 351V384M612.5 351V384M633.5 351V384M665.5 351V384M686.5 351V384M718.5 351V384M739.5 351V384M771.5 351V384M792.5 351V384M824.5 351V384M845.5 351V384M877.5 351V384" stroke="#8a8a8a" fill="none"/>
<path d="M103.5 351V384M137.5 351V384M156.5 351V384M190.5 351V384M209.5 351V384M243.5 351V384M262.5 351V384M296.5 351V384M315.5 351V384M348.5 351V384M368.5 351V384M401.5 351V384M421.5 351V384M454.5 351V384M473.5 351V384M507.5 351V384M526.5 351V384M560.5 351V384M579.5 351V384M613.5 351V384M632.5 351V384M666.5 351V384M685.5 351V384M719.5 351V384M738.5 351V384M772.5 351V384M791.5 351V384M825.5 351V384M844.5 351V384M878.5 351V384" stroke="#000" stroke-opacity="0.12" fill="none"/><rect x="88" y="392" width="801" height="50" fill="#fefceb"/><rect x="104" y="401" width="10" height="33" fill="rgba(0,0,0,0.06)"/>
<rect x="157" y="401" width="10" height="33" fill="rgba(0,0,0,0.06)"/>
<rect x="210" y="401" width="10" height="33" fill="rgba(0,0,0,0.06)"/>
<rect x="263" y="401" width="10" height="33" fill="rgba(0,0,0,0.06)"/>
<rect x="316" y="401" width="10" height="33" fill="rgba(0,0,0,0.06)"/>
<rect x="369" y="401" width="10" height="33" fill="rgba(0,0,0,0.06)"/>
<rect x="422" y="401" width="10" height="33" fill="rgba(0,0,0,0.06)"/>
<rect x="474" y="401" width="11" height="33" fill="rgba(0,0,0,0.06)"/>
<rect x="527" y="401" width="11" height="33" fill="rgba(0,0,0,0.06)"/>
<rect x="580" y="401" width="11" height="33" fill="rgba(0,0,0,0.06)"/>
<rect x="633" y="401" width="11" height="33" fill="rgba(0,0,0,0.06)"/>
<rect x="686" y="401" width="11" height="33" fill="rgba(0,0,0,0.06)"/>
<rect x="739" y="401" width="11" height="33" fill="rgba(0,0,0,0.06)"/>
<rect x="792" y="401" width="11" height="33" fill="rgba(0,0,0,0.06)"/>
<rect x="845" y="401" width="11" height="33" fill="rgba(0,0,0,0.06)"/>
<path d="M104 400.5H115M157 400.5H168M210 400.5H221M263 400.5H274M316 400.5H327M369 400.5H380M422 400.5H433M474 400.5H486M527 400.5H539M580 400.5H592M633 400.5H645M686 400.5H698M739 400.5H751M792 400.5H804M845 400.5H857" stroke="#00b800" fill="none"/>
<path d="M88 434.5H105M114 434.5H158M167 434.5H211M220 434.5H264M273 434.5H317M326 434.5H370M379 434.5H423M432 434.5H475M485 434.5H528M538 434.5H581M591 434.5H634M644 434.5H687M697 434.5H740M750 434.5H793M803 434.5H846M856 434.5H890" stroke="#c40000" fill="none"/>
<path d="M104.5 401V434M114.5 401V434M157.5 401V434M167.5 401V434M210.5 401V434M220.5 401V434M263.5 401V434M273.5 401V434M316.5 401V434M326.5 401V434M369.5 401V434M379.5 401V434M422.5 401V434M432.5 401V434M474.5 401V434M485.5 401V434M527.5 401V434M538.5 401V434M580.5 401V434M591.5 401V434M633.5 401V434M644.5 401V434M686.5 401V434M697.5 401V434M739.5 401V434M750.5 401V434M792.5 401V434M803.5 401V434M845.5 401V434M856.5 401V434" stroke="#8a8a8a" fill="none"/>
<path d="M105.5 401V434M113.5 401V434M158.5 401V434M166.5 401V434M211.5 401V434M219.5 401V434M264.5 401V434M272.5 401V434M317.5 401V434M325.5 401V434M370.5 401V434M378.5 401V434M423.5 401V434M431.5 401V434M475.5 401V434M484.5 401V434M528.5 401V434M537.5 401V434M581.5 401V434M590.5 401V434M634.5 401V434M643.5 401V434M687.5 401V434M696.5 401V434M740.5 401V434M749.5 401V434M793.5 401V434M802.5 401V434M846.5 401V434M855.5 401V434" stroke="#000" stroke-opacity="0.12" fill="none"/><rect x="88" y="442" width="801" height="50" fill="#f4fbec"/><rect x="88" y="451" width="27" height="33" fill="rgba(0,0,0,0.06)"/>
<rect x="167" y="451" width="54" height="33" fill="rgba(0,0,0,0.06)"/>
<rect x="273" y="451" width="54" height="33" fill="rgba(0,0,0,0.06)"/>
<rect x="379" y="451" width="53" height="33" fill="rgba(0,0,0,0.06)"/>
<rect x="485" y="451" width="53" height="33" fill="rgba(0,0,0,0.06)"/>
<rect x="591" y="451" width="53" height="33" fill="rgba(0,0,0,0.06)"/>
<rect x="697" y="451" width="53" height="33" fill="rgba(0,0,0,0.06)"/>
<rect x="802" y="451" width="54" height="33" fill="rgba(0,0,0,0.06)"/>
<path d="M88 450.5H116M167 450.5H222M273 450.5H328M379 450.5H433M485 450.5H539M591 450.5H645M697 450.5H751M802 450.5H857" stroke="#00b800" fill="none"/>
<path d="M115 484.5H168M221 484.5H274M327 484.5H380M432 484.5H486M538 484.5H592M644 484.5H698M750 484.5H803M856 484.5H890" stroke="#c40000" fill="none"/>
<path d="M115.5 451V484M167.5 451V484M221.5 451V484M273.5 451V484M327.5 451V484M379.5 451V484M432.5 451V484M485.5 451V484M538.5 451V484M591.5 451V484M644.5 451V484M697.5 451V484M750.5 451V484M802.5 451V484M856.5 451V484" stroke="#8a8a8a" fill="none"/>
<path d="M114.5 451V484M168.5 451V484M220.5 451V484M274.5 451V484M326.5 451V484M380.5 451V484M431.5 451V484M486.5 451V484M537.5 451V484M592.5 451V484M643.5 451V484M698.5 451V484M749.5 451V484M803.5 451V484M855.5 451V484" stroke="#000" stroke-opacity="0.12" fill="none"/><rect x="88" y="492" width="801" height="50" fill="#eff3f8"/><rect x="88" y="501" width="26" height="33" fill="rgba(0,0,0,0.06)"/>
<rect x="326" y="501" width="106" height="33" fill="rgba(0,0,0,0.06)"/>
<rect x="538" y="501" width="106" height="33" fill="rgba(0,0,0,0.06)"/>
<rect x="856" y="501" width="33" height="33" fill="rgba(0,0,0,0.06)"/>
<path d="M88 500.5H115M326 500.5H433M538 500.5H645M856 500.5H890" stroke="#00b800" fill="none"/>
<path d="M114 534.5H327M432 534.5H539M644 534.5H857" stroke="#c40000" fill="none"/>
<path d="M114.5 501V534M326.5 501V534M432.5 501V534M538.5 501V534M644.5 501V534M856.5 501V534" stroke="#8a8a8a" fill="none"/>
<path d="M113.5 501V534M327.5 501V534M431.5 501V534M539.5 501V534M643.5 501V534M857.5 501V534" stroke="#000" stroke-opacity="0.12" fill="none"/><rect x="88" y="542" width="801" height="50" fill="#f4f1f4"/><rect x="88" y="551" width="26" height="33" fill="rgba(0,0,0,0.06)"/>
<rect x="432" y="551" width="212" height="33" fill="rgba(0,0,0,0.06)"/>
<path d="M88 550.5H115M432 550.5H645" stroke="#00b800" fill="none"/>
<path d="M114 584.5H433M644 584.5H890" stroke="#c40000" fill="none"/>
<path d="M114.5 551V584M432.5 551V584M644.5 551V584" stroke="#8a8a8a" fill="none"/>
<path d="M113.5 551V584M433.5 551V584M643.5 551V584" stroke="#000" stroke-opacity="0.12" fill="none"/>
<path d="M19.5 225.5H78L86.5 234.5L78 243.5H19.5Z" fill="#16191a" stroke="#000000"/><path d="M20.5 226.5H77.6L85.1 234.5L77.6 242.5H20.5Z" fill="none" stroke="#2e3436" stroke-opacity="0.6"/><text x="24" y="239.1" font-size="12.5" fill="#f0f0f0">Q1(U1A)</text><path d="M16.5 274.0H78.5L87 284.5L78.5 295.0H16.5Z" fill="none" stroke="#4a90d9" stroke-width="3" stroke-linejoin="round"/><path d="M19.5 275.5H78L86.5 284.5L78 293.5H19.5Z" fill="#8f5202" stroke="#5c3500"/><path d="M20.5 276.5H77.6L85.1 284.5L77.6 292.5H20.5Z" fill="none" stroke="#f57900" stroke-opacity="0.6"/><text x="24" y="289.1" font-size="12.5" fill="#fff">Q2(U1A)</text><path d="M19.5 325.5H78L86.5 334.5L78 343.5H19.5Z" fill="#cc0000" stroke="#8c0000"/><path d="M20.5 326.5H77.6L85.1 334.5L77.6 342.5H20.5Z" fill="none" stroke="#ef2929" stroke-opacity="0.6"/><text x="24" y="339.1" font-size="12.5" fill="#fff">Q3(U1A)</text><path d="M19.5 375.5H78L86.5 384.5L78 393.5H19.5Z" fill="#f57900" stroke="#8c4a00"/><path d="M20.5 376.5H77.6L85.1 384.5L77.6 392.5H20.5Z" fill="none" stroke="#fcaf3e" stroke-opacity="0.6"/><text x="24" y="389.1" font-size="12.5" fill="#000">Q4(U1A)</text><path d="M19.5 425.5H78L86.5 434.5L78 443.5H19.5Z" fill="#edd400" stroke="#8a7a00"/><path d="M20.5 426.5H77.6L85.1 434.5L77.6 442.5H20.5Z" fill="none" stroke="#fce94f" stroke-opacity="0.6"/><text x="24" y="439.1" font-size="12.5" fill="#000">Q1(U1B)</text><path d="M19.5 475.5H78L86.5 484.5L78 493.5H19.5Z" fill="#73d216" stroke="#3d7a08"/><path d="M20.5 476.5H77.6L85.1 484.5L77.6 492.5H20.5Z" fill="none" stroke="#8ae234" stroke-opacity="0.6"/><text x="24" y="489.1" font-size="12.5" fill="#000">Q2(U1B)</text><path d="M19.5 525.5H78L86.5 534.5L78 543.5H19.5Z" fill="#3465a4" stroke="#1e3d66"/><path d="M20.5 526.5H77.6L85.1 534.5L77.6 542.5H20.5Z" fill="none" stroke="#729fcf" stroke-opacity="0.6"/><text x="24" y="539.1" font-size="12.5" fill="#fff">Q3(U1B)</text><path d="M19.5 575.5H78L86.5 584.5L78 593.5H19.5Z" fill="#75507b" stroke="#3f2a42"/><path d="M20.5 576.5H77.6L85.1 584.5L77.6 592.5H20.5Z" fill="none" stroke="#ad7fa8" stroke-opacity="0.6"/><text x="24" y="589.1" font-size="12.5" fill="#fff">Q4(U1B)</text>
<path d="M115 155V657" stroke="#2424c8" stroke-width="2" stroke-dasharray="4 2"/>
<rect x="889" y="156" width="13" height="503" fill="#c4c5c3"/>
<rect x="893" y="331" width="6" height="163" rx="3" fill="#7a7d7b"/>
<rect x="88" y="659" width="801" height="13" fill="#c4c5c3"/>
<rect x="104" y="663" width="128" height="6" rx="3" fill="#7a7d7b"/>
<rect x="889" y="659" width="13" height="13" fill="#e8e8e7"/>
<!-- trigger marker -->
<rect x="867.5" y="557.5" width="19" height="19" rx="3" fill="#edd400" stroke="#8a7a10"/>
<path d="M870.5 562H874.5L879 571H884" stroke="#000" stroke-width="2" fill="none"/>
<text x="899" y="668.5" text-anchor="end" font-size="12" letter-spacing="0.2" fill="#ff7070" fill-opacity="0.85">© H.Kuhlmann 2018-2023</text>
</svg>
</body></html>
